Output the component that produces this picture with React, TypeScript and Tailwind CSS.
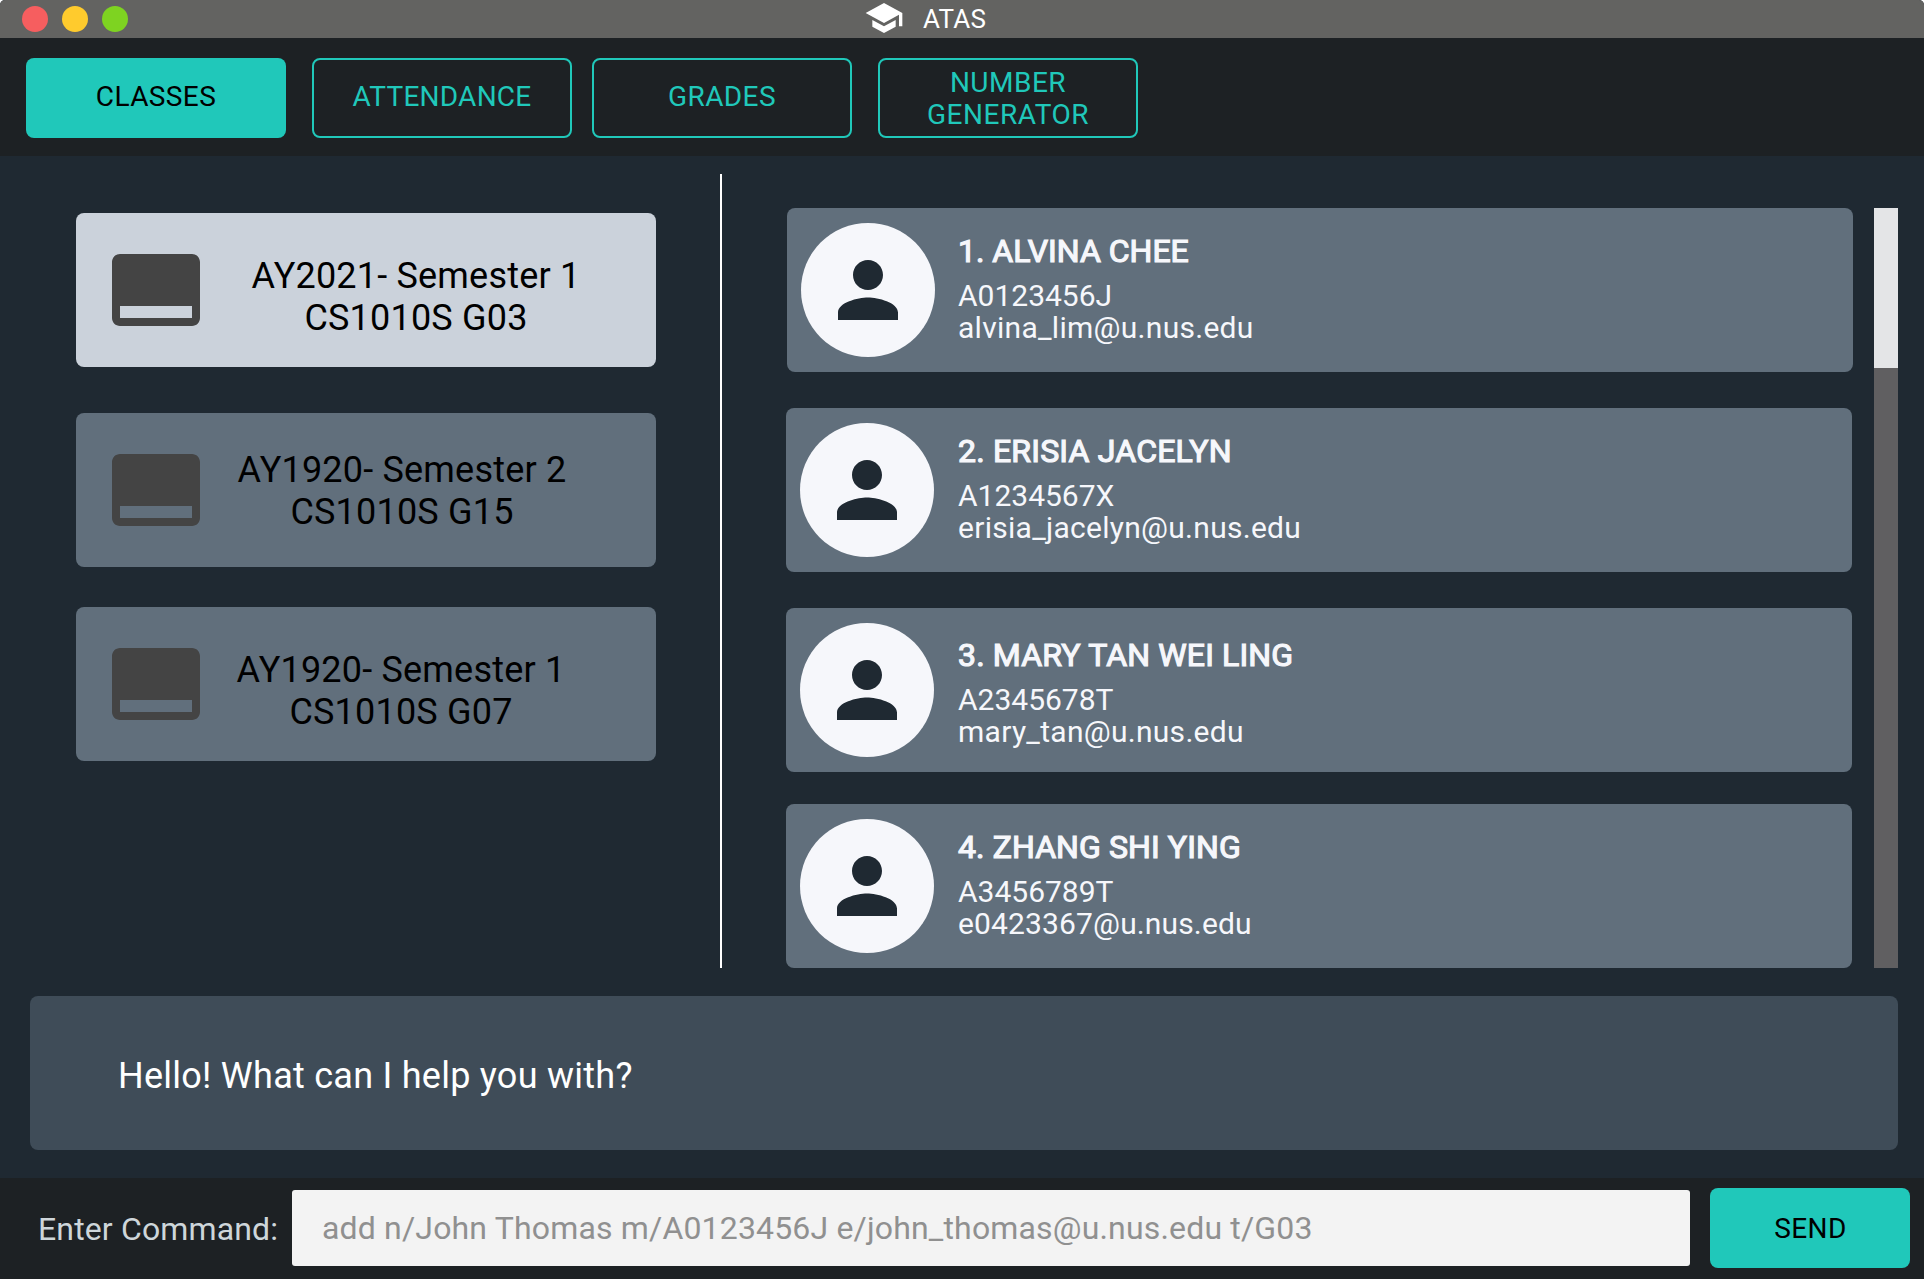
type ClassItem = { term: string; group: string; card: string; label: string };
type Student = { name: string; id: string; email: string; card: string; body: string; nameSpacing: string; emailSpacing: string };

const classes: ClassItem[] = [
  { term: "AY2021- Semester 1", group: "CS1010S G03", card: "bg-[#cbd2db]", label: "ml-[47px] mt-[14px]" },
  { term: "AY1920- Semester 2", group: "CS1010S G15", card: "bg-[#616f7c] mt-[46px]", label: "ml-[33px] mt-[2px]" },
  { term: "AY1920- Semester 1", group: "CS1010S G07", card: "bg-[#616f7c] mt-[40px]", label: "ml-[32px] mt-[14px]" },
];

const students: Student[] = [
  { name: "1. ALVINA CHEE", id: "A0123456J", email: "alvina_lim@u.nus.edu", card: "ml-px", body: "ml-[23px] pt-[24px]", nameSpacing: "tracking-normal", emailSpacing: "tracking-[0.28px]" },
  { name: "2. ERISIA JACELYN", id: "A1234567X", email: "erisia_jacelyn@u.nus.edu", card: "mt-[36px]", body: "ml-[24px] pt-[24px]", nameSpacing: "tracking-[0.2px]", emailSpacing: "tracking-[0.28px]" },
  { name: "3. MARY TAN WEI LING", id: "A2345678T", email: "mary_tan@u.nus.edu", card: "mt-[36px]", body: "ml-[24px] pt-[28px]", nameSpacing: "tracking-[0.15px]", emailSpacing: "tracking-[0.28px]" },
  { name: "4. ZHANG SHI YING", id: "A3456789T", email: "e0423367@u.nus.edu", card: "mt-[32px]", body: "ml-[24px] pt-[24px]", nameSpacing: "tracking-[0.1px]", emailSpacing: "tracking-[0.14px]" },
];

const tabBase = "flex h-[80px] w-[260px] items-center justify-center rounded-[8px] text-center text-[28px] leading-[32px] tracking-[0.4px]";
const tabOutline = "border-2 border-[#20c8ba] text-[#20c8ba]";

function TitleBar() {
  return (
    <header className="flex h-[38px] shrink-0 items-center bg-[#636361]">
      <div className="ml-[22px] flex w-[842px] gap-[14px]">
        <span className="size-[26px] rounded-full bg-[#f65e5f]" />
        <span className="size-[26px] rounded-full bg-[#ffcb2d]" />
        <span className="size-[26px] rounded-full bg-[#7ed321]" />
      </div>
      <svg viewBox="0 0 24 24" className="-mt-[2px] size-[40px] shrink-0 fill-white">
        <path d="M5 13.18v4L12 21l7-3.82v-4L12 17l-7-3.82zM12 3L1 9l11 6 9-4.91V17h2V9L12 3z" />
      </svg>
      <h1 className="ml-[19px] text-[26px] leading-[38px] tracking-[0.2px] text-white">ATAS</h1>
    </header>
  );
}

function Tabs() {
  return (
    <nav className="flex h-[118px] shrink-0 items-start bg-[#1d2124] pl-[26px] pt-[20px]">
      <button className={`${tabBase} bg-[#20c8ba] text-black`}>
        <span className="-mt-[3px]">CLASSES</span>
      </button>
      <button className={`${tabBase} ${tabOutline} ml-[26px]`}>
        <span className="-mt-[3px] tracking-[0.25px]">ATTENDANCE</span>
      </button>
      <button className={`${tabBase} ${tabOutline} ml-[20px]`}>
        <span className="-mt-[3px]">GRADES</span>
      </button>
      <button className={`${tabBase} ${tabOutline} ml-[26px]`}>
        <span className="mt-px tracking-[0.5px]">
          NUMBER
          <br />
          GENERATOR
        </span>
      </button>
    </nav>
  );
}

function ClassCard({ item }: { item: ClassItem }) {
  return (
    <article className={`flex h-[154px] w-[580px] items-center rounded-[8px] pl-[32px] ${item.card}`}>
      <svg viewBox="0 0 24 24" className="size-[96px] shrink-0 fill-[#444444]">
        <path d="M21 3H3c-1.1 0-2 .9-2 2v14c0 1.1.9 2 2 2h18c1.1 0 2-.9 2-2V5c0-1.1-.9-2-2-2zm0 16H3v-3h18v3z" />
      </svg>
      <p className={`w-[330px] whitespace-nowrap text-center text-[36px] leading-[42px] tracking-[0.2px] text-black ${item.label}`}>
        {item.term}
        <br />
        {item.group}
      </p>
    </article>
  );
}

function StudentCard({ student }: { student: Student }) {
  return (
    <article className={`flex h-[164px] w-[1066px] shrink-0 rounded-[8px] bg-[#616f7c] ${student.card}`}>
      <div className="ml-[14px] mt-[15px] flex size-[134px] shrink-0 items-center justify-center rounded-full bg-[#f6f7fb]">
        <svg viewBox="0 0 24 24" className="size-[90px] fill-[#1f2932]">
          <path d="M12 12c2.21 0 4-1.79 4-4s-1.79-4-4-4-4 1.79-4 4 1.79 4 4 4zm0 2c-2.67 0-8 1.34-8 4v2h16v-2c0-2.66-5.33-4-8-4z" />
        </svg>
      </div>
      <div className={`text-[#f6f7fb] ${student.body}`}>
        <h2 className={`text-[32px] leading-[38px] [-webkit-text-stroke:1.2px_#f6f7fb] ${student.nameSpacing}`}>{student.name}</h2>
        <p className="mt-[10px] text-[30px] leading-[32px]">{student.id}</p>
        <p className={`text-[30px] leading-[32px] ${student.emailSpacing}`}>{student.email}</p>
      </div>
    </article>
  );
}

export default function App() {
  return (
    <div className="h-[1280px] w-[1924px] overflow-hidden bg-white font-[Roboto,sans-serif]">
      <div className="flex h-[1279px] flex-col overflow-hidden rounded-t-[5px] bg-[#1f2932]">
        <TitleBar />
        <Tabs />
        <main className="flex h-[812px] shrink-0">
          <section className="w-[720px] shrink-0 pl-[76px] pt-[57px]">
            {classes.map((item) => (
              <ClassCard key={item.group} item={item} />
            ))}
          </section>
          <div className="mt-[18px] w-[2px] shrink-0 bg-white" />
          <section className="ml-[64px] flex w-[1088px] shrink-0 flex-col pt-[52px]">
            {students.map((student) => (
              <StudentCard key={student.id} student={student} />
            ))}
          </section>
          <div className="mt-[52px] w-[24px] shrink-0 bg-[#605f61]">
            <div className="h-[160px] bg-[#e4e5e7]" />
          </div>
        </main>
        <section className="ml-[30px] mt-[28px] flex h-[154px] w-[1868px] shrink-0 items-center rounded-[8px] bg-[#3f4c58] pl-[88px]">
          <p className="mt-[6px] text-[36px] leading-[42px] tracking-[0.26px] text-white">Hello! What can I help you with?</p>
        </section>
        <footer className="mt-[28px] flex flex-1 bg-[#1d2124]">
          <label className="ml-[38px] mt-[32px] w-[254px] shrink-0 whitespace-nowrap text-[32px] leading-[38px] tracking-[0.14px] text-[#ced6da]">Enter Command:</label>
          <div className="mt-[12px] flex h-[76px] w-[1398px] shrink-0 items-center rounded-[3px] bg-[#f3f3f3] pl-[30px] text-[32px] leading-[38px] tracking-[0.17px] text-[#909090]">
            add n/John Thomas m/A0123456J e/john_thomas@u.nus.edu t/G03
          </div>
          <button className="ml-[20px] mt-[10px] flex h-[80px] w-[200px] shrink-0 items-center justify-center rounded-[8px] bg-[#20c8ba] pl-px pt-[2px] text-[28px] leading-[32px] tracking-[0.4px] text-black">SEND</button>
        </footer>
      </div>
    </div>
  );
}
